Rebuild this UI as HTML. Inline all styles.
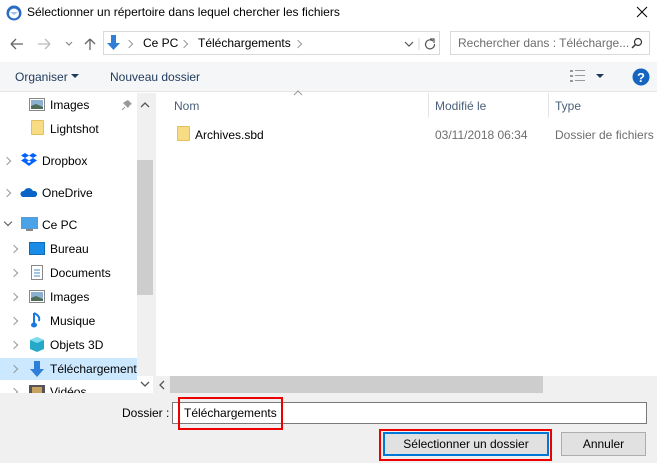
<!DOCTYPE html>
<html><head><meta charset="utf-8"><style>
*{margin:0;padding:0;box-sizing:border-box}
body{width:657px;height:463px;overflow:hidden;background:#fff;font-family:"Liberation Sans",sans-serif;font-size:12px;color:#000;position:relative}
.a{position:absolute;white-space:nowrap}
.chev{position:absolute;width:6px;height:6px;border-right:1.3px solid #999;border-bottom:1.3px solid #999;transform:rotate(-45deg)}
.chevd{position:absolute;width:6px;height:6px;border-right:1.3px solid #555;border-bottom:1.3px solid #555;transform:rotate(45deg)}
.fold{position:absolute;width:13px;height:15px;background:#f8dc84;border:1px solid #e4c05a;border-radius:1px}
</style></head><body>
<svg class="a" style="left:6px;top:5px" width="16" height="16"><circle cx="8" cy="8" r="7.5" fill="#2a6cc4"/><circle cx="8" cy="8.5" r="5" fill="#fff"/><path d="M4 7h8l-4 3z" fill="#9cc3ea"/></svg>
<div class="a" style="left:27px;top:5px;font-size:12px">Sélectionner un répertoire dans lequel chercher les fichiers</div>
<svg class="a" style="left:636px;top:6px" width="12" height="12"><path d="M1 1L11 11M11 1L1 11" stroke="#000" stroke-width="1"/></svg>
<svg class="a" style="left:8px;top:36px" width="100" height="16">
<path d="M3 8h12M3 8l5-5M3 8l5 5" stroke="#666" stroke-width="1.3" fill="none"/>
<path d="M30 8h12M42 8l-5-5M42 8l-5 5" stroke="#bbb" stroke-width="1.3" fill="none"/>
<path d="M58 6l3 3 3-3" stroke="#888" stroke-width="1.2" fill="none"/>
<path d="M82 14V3M82 3l-5 5M82 3l5 5" stroke="#666" stroke-width="1.3" fill="none"/>
</svg>
<div class="a" style="left:103px;top:31px;width:337px;height:24px;border:1px solid #d9d9d9"></div>
<svg class="a" style="left:106px;top:34px" width="16" height="18"><path d="M5 1h5v8h4l-6.5 7L1 9h4z" fill="#2f7fd8"/></svg>
<div class="chev" style="left:126px;top:41px"></div>
<div class="a" style="left:143px;top:36px">Ce PC</div>
<div class="chev" style="left:181px;top:41px"></div>
<div class="a" style="left:198px;top:36px">Téléchargements</div>
<div class="chev" style="left:295px;top:41px"></div>
<svg class="a" style="left:404px;top:38px" width="36" height="12"><path d="M1 4l4 4 4-4" stroke="#555" stroke-width="1.2" fill="none"/><line x1="15" y1="-2" x2="15" y2="16" stroke="#d9d9d9"/><path d="M29 3a4.5 4.5 0 1 0 1.5 3" stroke="#555" stroke-width="1.2" fill="none"/><path d="M26 1h4v4" stroke="#555" stroke-width="1.2" fill="none"/></svg>
<div class="a" style="left:450px;top:31px;width:200px;height:24px;border:1px solid #d9d9d9"></div>
<div class="a" style="left:458px;top:36px;color:#6d6d6d">Rechercher dans : Télécharge...</div>
<svg class="a" style="left:631px;top:37px" width="12" height="12"><circle cx="7" cy="5" r="3.5" stroke="#333" stroke-width="1.2" fill="none"/><path d="M4.5 7.5L1 11" stroke="#333" stroke-width="1.4"/></svg>
<div class="a" style="left:0;top:62px;width:657px;height:30px;background:#f5f6f7;border-bottom:1px solid #e5e5e5"></div>
<div class="a" style="left:15px;top:70px;color:#1e395b">Organiser</div>
<svg class="a" style="left:71px;top:74px" width="8" height="5"><path d="M0 0h8L4 4z" fill="#1e395b"/></svg>
<div class="a" style="left:110px;top:70px;color:#1e395b">Nouveau dossier</div>
<svg class="a" style="left:570px;top:70px" width="16" height="12"><g fill="#999"><rect x="0" y="0" width="3" height="2"/><rect x="0" y="5" width="3" height="2"/><rect x="0" y="10" width="3" height="2"/><rect x="5" y="0" width="10" height="1"/><rect x="5" y="5" width="10" height="1"/><rect x="5" y="10" width="10" height="1"/></g></svg>
<svg class="a" style="left:596px;top:74px" width="8" height="5"><path d="M0 0h8L4 4z" fill="#1e395b"/></svg>
<svg class="a" style="left:632px;top:68px" width="18" height="18"><circle cx="9" cy="9" r="8.5" fill="#1565c0"/><text x="9" y="14" font-size="13" font-weight="bold" fill="#fff" text-anchor="middle" font-family="Liberation Sans">?</text></svg>
<div class="a" style="left:0;top:358px;width:137px;height:22px;background:#cce8ff"></div>
<div class="a" style="left:137px;top:93px;width:16px;height:283px;background:#f0f0f0"></div>
<div class="a" style="left:137px;top:160px;width:16px;height:135px;background:#cdcdcd"></div>
<svg class="a" style="left:140px;top:101px" width="10" height="8"><path d="M1 6l4-4 4 4" stroke="#555" stroke-width="1.3" fill="none"/></svg>
<svg class="a" style="left:140px;top:380px" width="10" height="8"><path d="M1 2l4 4 4-4" stroke="#555" stroke-width="1.3" fill="none"/></svg>
<div class="a" style="left:153px;top:93px;width:3px;height:300px;background:#f0f0f0"></div>
<svg class="a" style="left:29px;top:98px" width="16" height="13"><rect x=".5" y=".5" width="15" height="12" fill="#fff" stroke="#888"/><rect x="2" y="2" width="12" height="9" fill="#8eb0d0"/><path d="M2 8l5-2 7 3v2H2z" fill="#4f6e57"/></svg>
<div class="a" style="left:50px;top:98px">Images</div>
<svg class="a" style="left:121px;top:99px" width="12" height="12"><path d="M7 1l4 4-2 1-2 3-5-5 3-2z" fill="#999"/><path d="M4 8l-3 3" stroke="#999"/></svg>
<div class="fold" style="left:31px;top:120px"></div>
<div class="a" style="left:50px;top:122px">Lightshot</div>
<div class="chev" style="left:4px;top:158px"></div>
<svg class="a" style="left:21px;top:153px" width="16" height="14"><g fill="#0061fe"><path d="M4 0l4 2.5-4 2.5-4-2.5z"/><path d="M12 0l4 2.5-4 2.5-4-2.5z"/><path d="M4 5l4 2.5-4 2.5-4-2.5z"/><path d="M12 5l4 2.5-4 2.5-4-2.5z"/><path d="M8 10l4-2 0 2-4 3-4-3 0-2z"/></g></svg>
<div class="a" style="left:42px;top:154px">Dropbox</div>
<div class="chev" style="left:4px;top:190px"></div>
<svg class="a" style="left:20px;top:187px" width="18" height="11"><path d="M3 10a3 3 0 0 1 1-6 5 5 0 0 1 9 0 3 3 0 0 1 2 6z" fill="#0a64c8"/></svg>
<div class="a" style="left:42px;top:186px">OneDrive</div>
<div class="chevd" style="left:5px;top:219px"></div>
<svg class="a" style="left:21px;top:217px" width="17" height="15"><rect x=".5" y=".5" width="16" height="11" fill="#4aa3e6" stroke="#5a9bd4"/><rect x="5" y="12" width="7" height="2" fill="#888"/></svg>
<div class="a" style="left:42px;top:218px">Ce PC</div>
<div class="chev" style="left:11px;top:246px"></div>
<svg class="a" style="left:29px;top:242px" width="16" height="13"><rect x=".5" y=".5" width="15" height="12" fill="#1a8be6" stroke="#0d6cb8"/></svg>
<div class="a" style="left:50px;top:242px">Bureau</div>
<div class="chev" style="left:11px;top:270px"></div>
<svg class="a" style="left:31px;top:265px" width="12" height="15"><rect x=".5" y=".5" width="11" height="14" fill="#fff" stroke="#888"/><path d="M3 5h6M3 8h6M3 11h6" stroke="#4a8ac8"/></svg>
<div class="a" style="left:50px;top:266px">Documents</div>
<div class="chev" style="left:11px;top:294px"></div>
<svg class="a" style="left:29px;top:290px" width="16" height="13"><rect x=".5" y=".5" width="15" height="12" fill="#fff" stroke="#888"/><rect x="2" y="2" width="12" height="9" fill="#8eb0d0"/><path d="M2 8l5-2 7 3v2H2z" fill="#4f6e57"/></svg>
<div class="a" style="left:50px;top:290px">Images</div>
<div class="chev" style="left:11px;top:318px"></div>
<svg class="a" style="left:31px;top:312px" width="12" height="17"><path d="M3 1v11" stroke="#1a7ae0" stroke-width="2"/><ellipse cx="3" cy="13" rx="3" ry="2.5" fill="#1a7ae0"/><path d="M3 1c4 2 6 4 5 8" stroke="#1a7ae0" stroke-width="2" fill="none"/></svg>
<div class="a" style="left:50px;top:314px">Musique</div>
<div class="chev" style="left:11px;top:342px"></div>
<svg class="a" style="left:29px;top:336px" width="16" height="17"><path d="M8 1l7 3v9l-7 3-7-3V4z" fill="#26a9c8"/><path d="M8 1l7 3-7 3-7-3z" fill="#7fdcee"/></svg>
<div class="a" style="left:50px;top:338px">Objets 3D</div>
<div class="chev" style="left:11px;top:366px"></div>
<svg class="a" style="left:29px;top:360px" width="16" height="18"><path d="M5 1h6v8h4l-7 8-7-8h4z" fill="#2f7fd8"/></svg>
<div class="a" style="left:50px;top:362px;width:87px;overflow:hidden">Téléchargements</div>
<div class="a" style="left:0;top:376px;width:137px;height:17px;overflow:hidden"><div class="chev" style="left:11px;top:13px"></div><svg class="a" style="left:29px;top:9px" width="16" height="13"><rect width="16" height="13" fill="#555"/><rect x="3" y="2" width="10" height="9" fill="#c8a060"/></svg><div class="a" style="left:50px;top:9px">Vidéos</div></div>
<svg class="a" style="left:293px;top:90px" width="10" height="6"><path d="M1 5l4-4 4 4" stroke="#999" fill="none"/></svg>
<div class="a" style="left:174px;top:99px;color:#4c607a">Nom</div>
<div class="a" style="left:428px;top:93px;width:1px;height:25px;background:#e5e5e5"></div>
<div class="a" style="left:435px;top:99px;color:#4c607a">Modifié le</div>
<div class="a" style="left:548px;top:93px;width:1px;height:25px;background:#e5e5e5"></div>
<div class="a" style="left:555px;top:99px;color:#4c607a">Type</div>
<div class="fold" style="left:177px;top:126px"></div>
<div class="a" style="left:195px;top:128px">Archives.sbd</div>
<div class="a" style="left:435px;top:128px;color:#6d6d6d">03/11/2018 06:34</div>
<div class="a" style="left:555px;top:128px;color:#6d6d6d">Dossier de fichiers</div>
<div class="a" style="left:156px;top:376px;width:501px;height:17px;background:#f0f0f0"></div>
<div class="a" style="left:170px;top:376px;width:373px;height:17px;background:#cdcdcd"></div>
<svg class="a" style="left:158px;top:380px" width="8" height="10"><path d="M6 1L2 5l4 4" stroke="#555" stroke-width="1.3" fill="none"/></svg>
<div class="a" style="left:0;top:393px;width:657px;height:70px;background:#f0f0f0"></div>
<div class="a" style="left:122px;top:406px">Dossier :</div>
<div class="a" style="left:172px;top:402px;width:475px;height:22px;background:#fff;border:1px solid #7a7a7a"></div>
<div class="a" style="left:178px;top:397px;width:105px;height:33px;border:2px solid #e00"></div>
<div class="a" style="left:184px;top:406px">Téléchargements</div>
<div class="a" style="left:379px;top:429px;width:173px;height:32px;border:2px solid #e00"></div>
<div class="a" style="left:383px;top:432px;width:166px;height:24px;background:#e1e1e1;border:2px solid #0078d7"></div>
<div class="a" style="left:383px;top:437px;width:166px;text-align:center">Sélectionner un dossier</div>
<div class="a" style="left:561px;top:432px;width:85px;height:24px;background:#e1e1e1;border:1px solid #adadad"></div>
<div class="a" style="left:561px;top:437px;width:85px;text-align:center">Annuler</div>
</body></html>
